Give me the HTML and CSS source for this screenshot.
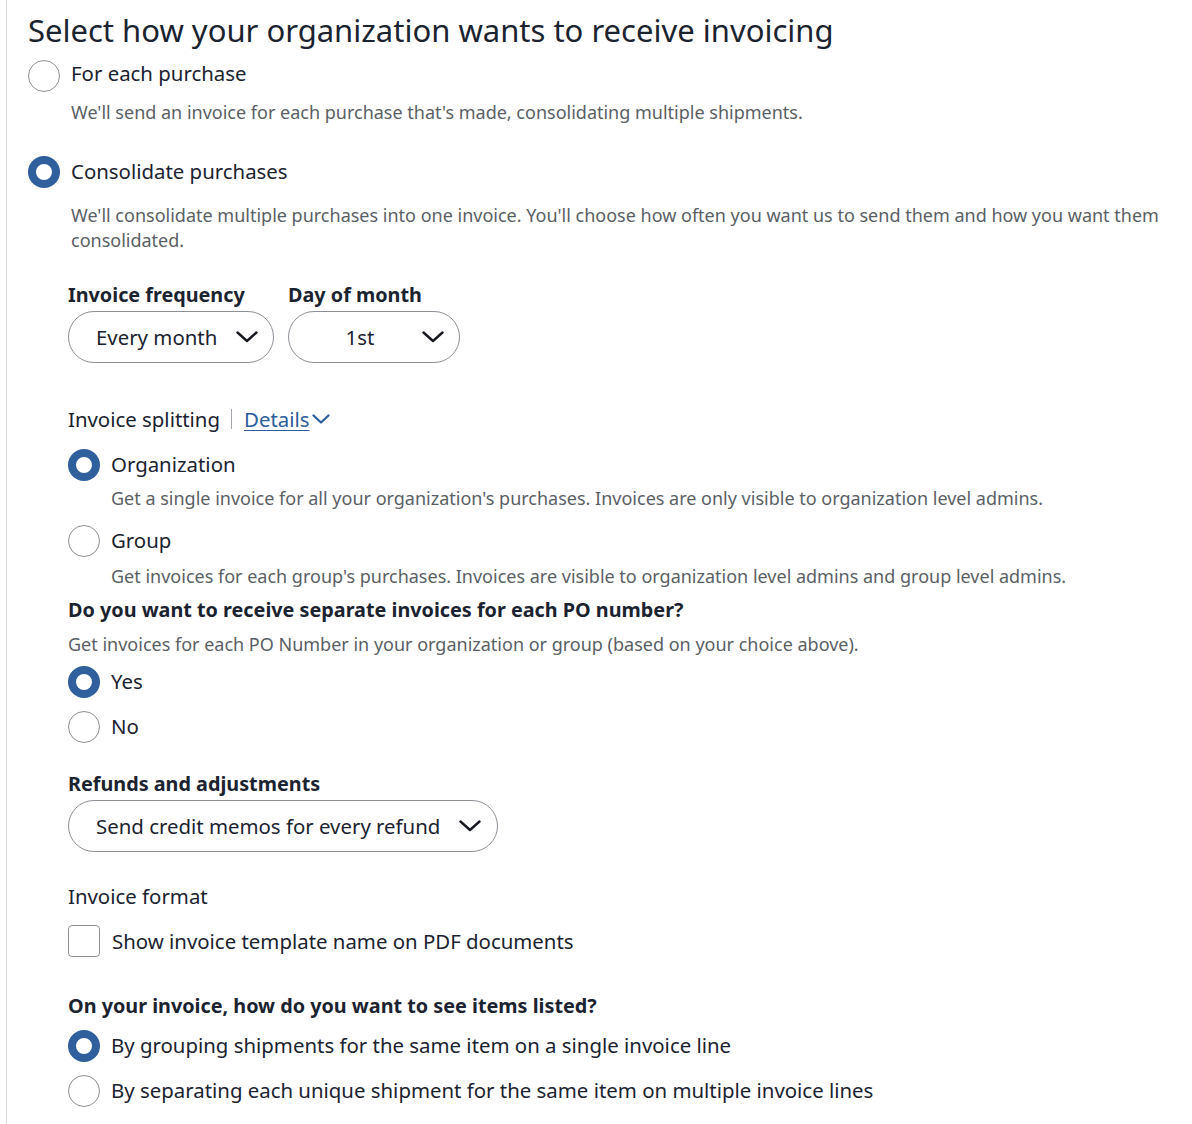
FILE: index.html
```html
<!DOCTYPE html>
<html lang="en">
<head>
<meta charset="utf-8">
<title>Invoicing</title>
<link rel="stylesheet" href="styles.css">
</head>
<body>
<main class="panel">
  <h1 class="title">Select how your organization wants to receive invoicing</h1>

  <div class="radio-row r-each">
    <span class="radio"></span><span class="label">For each purchase</span>
  </div>
  <p class="desc d-each">We'll send an invoice for each purchase that's made, consolidating multiple shipments.</p>

  <div class="radio-row r-cons">
    <span class="radio checked"></span><span class="label">Consolidate purchases</span>
  </div>
  <p class="desc d-cons">We'll consolidate multiple purchases into one invoice. You'll choose how often you want us to send them and how you want them consolidated.</p>

  <section class="sub">
    <div class="selects">
      <div class="field">
        <div class="field-label">Invoice frequency</div>
        <div class="select sel-freq"><span class="sel-text">Every month</span>
          <svg class="chev" viewBox="0 0 22 12" width="22" height="12"><path d="M1.5 1.5 L11 10 L20.5 1.5"/></svg></div>
      </div>
      <div class="field">
        <div class="field-label">Day of month</div>
        <div class="select sel-day"><span class="sel-text center">1st</span>
          <svg class="chev" viewBox="0 0 22 12" width="22" height="12"><path d="M1.5 1.5 L11 10 L20.5 1.5"/></svg></div>
      </div>
    </div>

    <div class="split-head">
      <span>Invoice splitting</span><span class="sep"></span>
      <a class="details" href="#">Details</a>
      <svg class="mini-chev" viewBox="0 0 18 10" width="18" height="10"><path d="M1.5 1.5 L9 8.5 L16.5 1.5"/></svg>
    </div>

    <div class="radio-row r-org">
      <span class="radio checked"></span><span class="label">Organization</span>
    </div>
    <p class="desc indent d-org">Get a single invoice for all your organization's purchases. Invoices are only visible to organization level admins.</p>

    <div class="radio-row r-group">
      <span class="radio"></span><span class="label">Group</span>
    </div>
    <p class="desc indent d-group">Get invoices for each group's purchases. Invoices are visible to organization level admins and group level admins.</p>

    <h2 class="bold-head h-po">Do you want to receive separate invoices for each PO number?</h2>
    <p class="desc d-po">Get invoices for each PO Number in your organization or group (based on your choice above).</p>

    <div class="radio-row r-yes">
      <span class="radio checked"></span><span class="label">Yes</span>
    </div>
    <div class="radio-row r-no">
      <span class="radio"></span><span class="label">No</span>
    </div>

    <div class="field f-refund">
      <div class="field-label">Refunds and adjustments</div>
      <div class="select sel-refund"><span class="sel-text">Send credit memos for every refund</span>
        <svg class="chev" viewBox="0 0 22 12" width="22" height="12"><path d="M1.5 1.5 L11 10 L20.5 1.5"/></svg></div>
    </div>

    <div class="plain-head">Invoice format</div>
    <div class="check-row">
      <span class="checkbox"></span><span class="label">Show invoice template name on PDF documents</span>
    </div>

    <h2 class="bold-head h-items">On your invoice, how do you want to see items listed?</h2>
    <div class="radio-row r-grp">
      <span class="radio checked"></span><span class="label">By grouping shipments for the same item on a single invoice line</span>
    </div>
    <div class="radio-row r-sep">
      <span class="radio"></span><span class="label">By separating each unique shipment for the same item on multiple invoice lines</span>
    </div>
  </section>
</main>
</body>
</html>
```

FILE: styles.css
```css
* { box-sizing: border-box; }
html, body { margin: 0; padding: 0; background: #ffffff; }
body {
  font-family: "Noto Sans", "Open Sans", Arial, sans-serif;
  color: #16191f;
  width: 1192px;
  height: 1124px;
  overflow: hidden;
}
.panel {
  margin-left: 6px;
  border-left: 1px solid #d5d9d9;
  padding: 10px 20px 0 21px;
  min-height: 1124px;
}
.title {
  margin: 0;
  font-size: 31px;
  line-height: 40px;
  font-weight: 400;
  color: #1b2330;
}
.radio-row, .check-row {
  display: flex;
  align-items: center;
  height: 32px;
}
.radio {
  flex: 0 0 32px;
  width: 32px;
  height: 32px;
  border-radius: 50%;
  border: 1px solid #8d9096;
  background: #fff;
}
.radio.checked {
  border: 8px solid #2f5f9c;
}
.label {
  margin-left: 11px;
  font-size: 20.4px;
  line-height: 24px;
  margin-top: -3px;
  color: #1b2330;
}
.r-each .label { margin-top: -7px; }
.desc {
  margin: 0;
  font-size: 18px;
  line-height: 25px;
  color: #5a5f66;
}
.d-each { margin: 8px 0 0 43px; }
.r-each { margin-top: 10px; }
.r-cons { margin-top: 31px; }
.d-cons { margin: 15px 0 0 43px; }
.sub { padding-left: 40px; }
.selects { display: flex; gap: 14px; margin-top: 30px; }
.field-label {
  font-size: 19.8px;
  line-height: 24px;
  font-weight: 700;
  color: #1b2330;
}
.select {
  margin-top: 4px;
  height: 52px;
  border: 1px solid #8d9096;
  border-radius: 26px;
  display: flex;
  align-items: center;
  padding: 0 15px 0 27px;
}
.sel-text { font-size: 20.4px; color: #1b2330; flex: 1; margin-top: -1px; }
.sel-text.center { text-align: center; padding-right: 18px; }
.sel-freq { width: 206px; }
.sel-day { width: 172px; }
.sel-refund { width: 430px; }
.f-refund .chev { margin-right: 1px; }
.chev { flex: 0 0 22px; }
.chev path, .mini-chev path {
  fill: none;
  stroke: #16191f;
  stroke-width: 2.4;
  stroke-linecap: round;
  stroke-linejoin: round;
}
.mini-chev path { stroke: #2c5d9c; stroke-width: 2.2; }
.split-head {
  margin-top: 44px;
  display: flex;
  align-items: center;
  font-size: 20.4px;
  line-height: 24px;
  color: #1b2330;
}
.sep {
  display: inline-block;
  width: 1px;
  height: 20px;
  background: #a2a6ac;
  margin: 0 12px 0 11px;
}
.details { color: #2c5d9c; text-decoration: underline; text-underline-offset: 3px; text-decoration-thickness: 1px; }
.mini-chev { margin-left: 2px; margin-top: -1px; }
.r-org { margin-top: 18px; }
.indent { margin-left: 43px; }
.desc.d-org { margin-top: 5px; line-height: 24px; }
.r-group { margin-top: 15px; }
.desc.d-group { margin-top: 7px; line-height: 24px; }
.bold-head {
  margin: 0;
  font-size: 19.8px;
  line-height: 24px;
  font-weight: 700;
  color: #1b2330;
}
.h-po { margin-top: 10px; }
.desc.d-po { margin-top: 10px; line-height: 24px; }
.r-yes { margin-top: 10px; }
.r-no { margin-top: 13px; }
.f-refund { margin-top: 29px; }
.plain-head {
  margin-top: 32px;
  font-size: 20.4px;
  line-height: 24px;
  color: #1b2330;
}
.check-row { margin-top: 17px; }
.checkbox {
  flex: 0 0 32px;
  width: 32px;
  height: 32px;
  border: 1px solid #8d9096;
  border-radius: 4px;
}
.check-row .label { margin-left: 12px; margin-top: 0; }
.h-items { margin-top: 37px; }
.r-grp { margin-top: 12px; }
.r-sep { margin-top: 13px; }
```
